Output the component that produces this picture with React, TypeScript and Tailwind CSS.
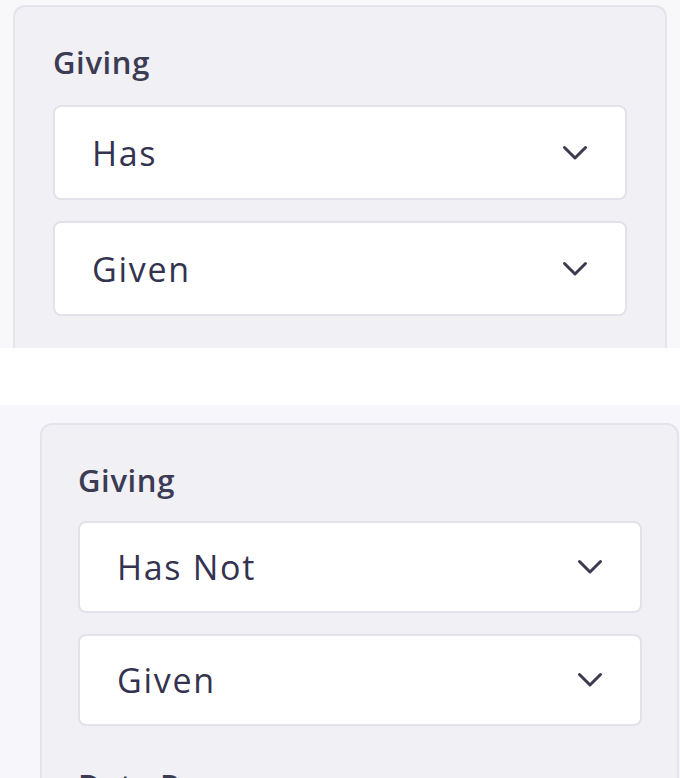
import { ReactNode } from "react";

const Chevron = () => (
  <svg width="26" height="16" viewBox="0 0 26 16" fill="none" className="shrink-0">
    <polyline
      points="2.5,2.5 13,13 23.5,2.5"
      stroke="#3a3a50"
      strokeWidth="3"
      strokeLinecap="round"
      strokeLinejoin="round"
    />
  </svg>
);

const Select = ({ value, tall }: { value: string; tall?: boolean }) => (
  <div
    className={`flex items-center justify-between rounded-lg border-2 border-[#e2e2ea] bg-white pl-[37px] pr-[37px] ${
      tall ? "h-[95px]" : "h-[92px]"
    }`}
  >
    <span className="text-[34px] leading-none tracking-[0.05em] text-[#33334f]">{value}</span>
    <Chevron />
  </div>
);

const Panel = ({ children, px }: { children: ReactNode; px: string }) => (
  <div className={`flex-1 rounded-t-xl border-2 border-b-0 border-[#e4e4ec] bg-[#f0f0f5] pt-[37px] ${px}`}>
    {children}
  </div>
);

export default function App() {
  return (
    <div
      className="w-[680px] h-[778px] overflow-hidden bg-white"
      style={{ fontFamily: '"Open Sans", "Liberation Sans", sans-serif' }}
    >
      {/* first capture */}
      <div className="flex h-[348px] flex-col overflow-hidden bg-[#f8f8fb] pt-[5px] pl-[13px] pr-[13px]">
        <Panel px="px-[38px]">
          <div className="text-[31px] leading-[36px] font-semibold tracking-[0.02em] text-[#3b3b54]">Giving</div>
          <div className="mt-[25px] flex flex-col gap-[21px]">
            <Select value="Has" tall />
            <Select value="Given" tall />
          </div>
        </Panel>
      </div>

      <div className="h-[57px] bg-white" />

      {/* second capture */}
      <div className="flex h-[373px] flex-col overflow-hidden bg-[#f7f7fb] pt-[18px] pl-[40px] pr-[1px]">
        <Panel px="pl-[36px] pr-[35px]">
          <div className="text-[31px] leading-[36px] font-semibold tracking-[0.02em] text-[#3b3b54]">Giving</div>
          <div className="mt-[23px] flex flex-col gap-[21px]">
            <Select value="Has Not" />
            <Select value="Given" />
          </div>
          <div className="mt-[41px] text-[31px] leading-[36px] font-semibold tracking-[0.02em] text-[#3b3b54]">
            Date Range
          </div>
        </Panel>
      </div>
    </div>
  );
}
